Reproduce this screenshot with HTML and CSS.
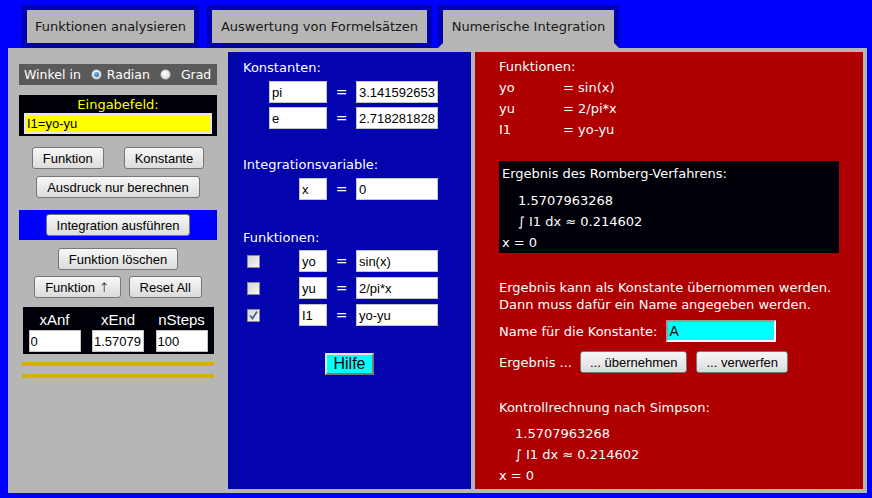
FILE: index.html
```html
<!DOCTYPE html>
<html>
<head>
  <title>Numerische Integration</title>
  <link rel="stylesheet" href="styles.css">
</head>
<body>
  <div class="tabs">
    <div class="tab tab-a"><span>Funktionen analysieren</span></div>
    <div class="tab tab-b"><span>Auswertung von Formelsätzen</span></div>
    <div class="tab tab-c active"><span>Numerische Integration</span></div>
  </div>
  <div class="panel">
    <div class="side">
      <div class="winkel">
        <span>Winkel in</span>
        <span class="radio on"></span><span class="rlabel">Radian</span>
        <span class="radio"></span><span class="rlabel wide">Grad</span>
      </div>
      <div class="eingabe">
        <div class="eingabe-label">Eingabefeld:</div>
        <input class="yellow" type="text" value="I1=yo-yu">
      </div>
      <div class="btn-row first">
        <button class="btn">Funktion</button>
        <button class="btn">Konstante</button>
      </div>
      <div class="btn-row">
        <button class="btn">Ausdruck nur berechnen</button>
      </div>
      <div class="run-bar">
        <button class="btn">Integration ausführen</button>
      </div>
      <div class="btn-row loeschen">
        <button class="btn">Funktion löschen</button>
      </div>
      <div class="btn-row tight">
        <button class="btn">Funktion <span class="arrow">↑</span></button>
        <button class="btn">Reset All</button>
      </div>
      <div class="limits">
        <div>xAnf</div>
        <div>xEnd</div>
        <div>nSteps</div>
        <input class="fld" type="text" value="0">
        <input class="fld" type="text" value="1.57079">
        <input class="fld" type="text" value="100">
      </div>
      <div class="gold"></div>
      <div class="gold"></div>
    </div>

    <div class="mid">
      <div class="title">Konstanten:</div>
      <div class="krow">
        <div class="name-cell"><input class="fld kname" type="text" value="pi"></div>
        <span class="eq">=</span>
        <input class="fld val" type="text" value="3.14159265358979">
      </div>
      <div class="krow">
        <div class="name-cell"><input class="fld kname" type="text" value="e"></div>
        <span class="eq">=</span>
        <input class="fld val" type="text" value="2.71828182845905">
      </div>

      <div class="title gap">Integrationsvariable:</div>
      <div class="krow">
        <div class="name-cell"><input class="fld sname" type="text" value="x"></div>
        <span class="eq">=</span>
        <input class="fld val" type="text" value="0">
      </div>

      <div class="title gap2">Funktionen:</div>
      <div class="krow frow">
        <div class="name-cell"><span class="chk"></span><input class="fld sname" type="text" value="yo"></div>
        <span class="eq">=</span>
        <input class="fld val" type="text" value="sin(x)">
      </div>
      <div class="krow frow">
        <div class="name-cell"><span class="chk"></span><input class="fld sname" type="text" value="yu"></div>
        <span class="eq">=</span>
        <input class="fld val" type="text" value="2/pi*x">
      </div>
      <div class="krow frow">
        <div class="name-cell">
          <span class="chk"><svg width="11" height="11" viewBox="0 0 11 11"><path d="M2 5.5 L4.5 8.5 L9 1.5" fill="none" stroke="#4b5d8e" stroke-width="1.8"/></svg></span>
          <input class="fld sname" type="text" value="I1">
        </div>
        <span class="eq">=</span>
        <input class="fld val" type="text" value="yo-yu">
      </div>
      <div class="help-row"><button class="help">Hilfe</button></div>
    </div>

    <div class="result">
      <div>Funktionen:</div>
      <div class="fn"><span>yo</span><span>= sin(x)</span></div>
      <div class="fn"><span>yu</span><span>= 2/pi*x</span></div>
      <div class="fn"><span>I1</span><span>= yo-yu</span></div>

      <div class="box">
        <div>Ergebnis des Romberg-Verfahrens:</div>
        <div class="ind first">1.5707963268</div>
        <div class="ind">∫ I1 dx ≈ 0.214602</div>
        <div>x = 0</div>
      </div>

      <div class="note">
        Ergebnis kann als Konstante übernommen werden.<br>
        Dann muss dafür ein Name angegeben werden.
      </div>
      <div class="name-row">
        <span>Name für die Konstante:</span>
        <input class="cyan" type="text" value="A">
      </div>
      <div class="take-row">
        <span>Ergebnis ...</span>
        <button class="btn">... übernehmen</button>
        <button class="btn">... verwerfen</button>
      </div>

      <div class="simpson">Kontrollrechnung nach Simpson:</div>
      <div class="ind first">1.5707963268</div>
      <div class="ind">∫ I1 dx ≈ 0.214602</div>
      <div>x = 0</div>
    </div>
  </div>
</body>
</html>
```

FILE: styles.css
```css
body {
  margin: 0;
  background-color: #0000ff;
  font-family: "DejaVu Sans", Verdana, sans-serif;
  font-size: 13px;
  width: 872px;
  height: 498px;
  overflow: hidden;
}
.tabs {
  display: flex;
  align-items: flex-start;
  height: 43px;
  padding: 5px 0 0 22px;
}
.tab {
  background-color: #0000b0;
  padding: 5px;
}
.tab span {
  display: block;
  height: 33px;
  line-height: 33px;
  text-align: center;
  background-color: #b6b6b6;
  background-image: radial-gradient(rgba(214, 160, 120, 0.35) 0.6px, transparent 0.9px);
  background-size: 7px 5px;
  color: #161616;
}
.tab-a { margin-right: 8px; }
.tab-a span { width: 167px; }
.tab-b { margin-right: 6px; }
.tab-b span { width: 215px; }
.tab-c span { width: 171px; }
.tab.active {
  padding-bottom: 0;
  position: relative;
}
.tab.active span {
  height: 38px;
}
/* beveled corners where the active tab joins the panel */
.tab.active::before,
.tab.active::after {
  content: "";
  position: absolute;
  bottom: 0;
  width: 0;
  height: 0;
  border-bottom: 5px solid #b6b6b6;
}
.tab.active::before {
  left: 0;
  border-left: 5px solid transparent;
}
.tab.active::after {
  right: 0;
  border-right: 5px solid transparent;
}
.panel {
  margin-left: 8px;
  width: 859px;
  height: 445px;
  box-sizing: border-box;
  padding: 4px 4px 4px 0;
  background-color: #b6b6b6;
  background-image: radial-gradient(rgba(214, 160, 120, 0.35) 0.6px, transparent 0.9px);
  background-size: 7px 5px;
  display: flex;
}

/* left column */
.side {
  width: 220px;
  flex: none;
  display: flex;
  flex-direction: column;
  align-items: center;
  padding-top: 12px;
}
.winkel {
  width: 198px;
  height: 21px;
  box-sizing: border-box;
  padding-left: 5px;
  display: flex;
  align-items: center;
  background-color: #5a5a5a;
  color: #fff;
  font-size: 12.5px;
  white-space: nowrap;
}
.radio {
  width: 11px;
  height: 11px;
  flex: none;
  box-sizing: border-box;
  border: 1px solid #8a8a8a;
  border-radius: 50%;
  margin-left: 10px;
  background: radial-gradient(circle at 40% 35%, #ffffff, #d0d0d0);
  position: relative;
}
.radio.on::after {
  content: "";
  position: absolute;
  left: 2px;
  top: 2px;
  width: 5px;
  height: 5px;
  border-radius: 50%;
  background: radial-gradient(circle at 40% 35%, #7cc4f0, #0b4d8c);
}
.rlabel { margin-left: 5px; }
.rlabel.wide { margin-left: 10px; }
.eingabe {
  margin-top: 10px;
  width: 198px;
  height: 41px;
  box-sizing: border-box;
  padding: 2px 5px 0;
  background-color: #000008;
  color: #ffff00;
  text-align: center;
}
.eingabe-label {
  line-height: 16px;
}
input {
  display: block;
  margin: 0;
  outline: none;
}
.yellow {
  width: 188px;
  height: 21px;
  box-sizing: border-box;
  border: 2px solid #e6e6e6;
  background-color: #ffff00;
  font: 13px "Liberation Sans", Arial, sans-serif;
  padding: 0 1px;
  color: #000;
}
.btn {
  font: 13px "Liberation Sans", Arial, sans-serif;
  height: 22px;
  padding: 0 10px;
  border: 1px solid #777;
  border-radius: 3px;
  background: linear-gradient(#f7f7f7, #dcdcdc);
  color: #000;
}
.arrow {
  font-family: "DejaVu Sans", sans-serif;
  font-size: 13px;
  font-weight: 300;
  line-height: 10px;
}
.btn-row {
  display: flex;
  justify-content: center;
  gap: 20px;
  margin-top: 7px;
}
.btn-row.first { margin-top: 11px; }
.btn-row.loeschen { margin-top: 8px; }
.btn-row.tight {
  margin-top: 6px;
  gap: 8px;
}
.run-bar {
  margin-top: 12px;
  width: 198px;
  height: 30px;
  box-sizing: border-box;
  padding-top: 4px;
  background-color: #0000ff;
  display: flex;
  justify-content: center;
}
.limits {
  margin-top: 9px;
  width: 191px;
  box-sizing: border-box;
  padding: 3px 6px 2px;
  background-color: #000008;
  color: #fff;
  display: grid;
  grid-template-columns: 52px 52px 52px;
  column-gap: 11.5px;
  text-align: center;
  font: 15px "Liberation Sans", Arial, sans-serif;
  line-height: 20px;
}
.fld {
  height: 22px;
  box-sizing: border-box;
  border: 1px solid #c4c4c4;
  padding: 0 2px;
  background-color: #fff;
  color: #000;
  font: 13px "Liberation Sans", Arial, sans-serif;
}
.limits .fld {
  width: 52px;
  padding: 0 1px;
}
.gold {
  width: 192px;
  height: 4px;
  margin-top: 8px;
  background-color: #d4b000;
}

/* middle column */
.mid {
  width: 243px;
  flex: none;
  background-color: #0404ae;
  color: #fff;
  padding-top: 7px;
}
.title {
  padding-left: 15px;
  line-height: 18px;
}
.title.gap { margin-top: 27px; }
.title.gap2 { margin-top: 29px; }
.krow {
  display: flex;
  align-items: center;
  height: 22px;
  margin-top: 4px;
  padding-left: 15px;
}
.krow.frow { margin-top: 5px; }
.title + .krow.frow { margin-top: 3px; }
.name-cell {
  width: 84px;
  display: flex;
  align-items: center;
}
.name-cell .fld { margin-left: auto; }
.kname { width: 58px; }
.sname { width: 28px; }
.eq {
  width: 29px;
  text-align: center;
  font-size: 14px;
}
.val { width: 82px; }
.chk {
  width: 13px;
  height: 13px;
  box-sizing: border-box;
  margin-left: 4px;
  border: 1px solid #8c8c8c;
  background: linear-gradient(135deg, #d4d4d4, #f6f6f6);
  display: flex;
  align-items: center;
  justify-content: center;
}
.help-row {
  margin-top: 27px;
  display: flex;
  justify-content: center;
}
.help {
  width: 49px;
  height: 22px;
  padding: 0;
  border: 2px solid;
  border-color: #e4e4e4 #7a7a7a #7a7a7a #e4e4e4;
  background-color: #00ffff;
  color: #000;
  font: 16px "Liberation Sans", Arial, sans-serif;
}

/* result column */
.result {
  width: 388px;
  flex: none;
  margin-left: 4px;
  box-sizing: border-box;
  padding: 4px 0 0 24px;
  background-color: #ae0000;
  color: #fff;
  line-height: 21px;
}
.fn {
  display: flex;
}
.fn span:first-child {
  width: 64px;
}
.box {
  margin-top: 21px;
  width: 340px;
  height: 92px;
  box-sizing: border-box;
  padding: 2px 0 0 3px;
  background-color: #000008;
}
.ind { padding-left: 16px; }
.ind.first { margin-top: 6px; }
.note {
  margin-top: 26px;
  line-height: 17px;
}
.name-row {
  margin-top: 7px;
  display: flex;
  align-items: center;
  height: 22px;
}
.cyan {
  width: 110px;
  height: 22px;
  box-sizing: border-box;
  margin-left: 9px;
  border: 2px solid;
  border-color: #9a9a9a #ffffff #ffffff #9a9a9a;
  background-color: #00ffff;
  font: 14px "Liberation Sans", Arial, sans-serif;
  padding: 0 1px;
  color: #000;
}
.take-row {
  margin-top: 9px;
  display: flex;
  align-items: center;
  height: 22px;
}
.take-row .btn {
  margin-left: 8px;
  padding: 0 9px;
}
.take-row .btn + .btn { margin-left: 9px; }
.simpson { margin-top: 24px; }
.result > .ind.first { margin-top: 5px; }
```
